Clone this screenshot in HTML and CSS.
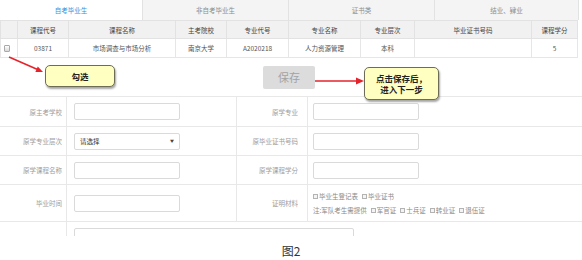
FILE: index.html
```html
<!DOCTYPE html>
<html lang="zh-CN">
<head>
    <meta charset="UTF-8">
    <meta name="viewport" content="width=device-width, initial-scale=1.0">
    <title>图2 - 免考申请</title>
    <link rel="stylesheet" href="styles.css">
</head>
<body>
    <div class="shot">
        <!-- 选项卡 -->
        <div class="tabs">
            <div class="tab active">自考毕业生</div>
            <div class="tab">非自考毕业生</div>
            <div class="tab">证书类</div>
            <div class="tab last">结业、肄业</div>
        </div>

        <!-- 课程表 -->
        <table class="course-table">
            <colgroup>
                <col style="width:17px"><col style="width:51px"><col style="width:107px">
                <col style="width:51px"><col style="width:62px"><col style="width:72px">
                <col style="width:54px"><col style="width:117px"><col style="width:46px">
            </colgroup>
            <thead>
                <tr>
                    <th></th>
                    <th>课程代号</th>
                    <th>课程名称</th>
                    <th>主考院校</th>
                    <th>专业代号</th>
                    <th>专业名称</th>
                    <th>专业层次</th>
                    <th>毕业证书号码</th>
                    <th>课程学分</th>
                </tr>
            </thead>
            <tbody>
                <tr>
                    <td class="chk-cell"><span class="chk"></span></td>
                    <td>03871</td>
                    <td>市场调查与市场分析</td>
                    <td>南京大学</td>
                    <td>A2020218</td>
                    <td>人力资源管理</td>
                    <td>本科</td>
                    <td></td>
                    <td>5</td>
                </tr>
            </tbody>
        </table>

        <div class="save-row">
            <button class="btn-save">保存</button>
        </div>

        <!-- 原学历表单 -->
        <div class="form">
            <div class="lbl">原主考学校</div>
            <div class="fld"><span class="inp"></span></div>
            <div class="lbl r">原学专业</div>
            <div class="fld r"><span class="inp"></span></div>

            <div class="lbl">原学专业层次</div>
            <div class="fld"><span class="inp sel"><span>请选择</span><span class="caret">▼</span></span></div>
            <div class="lbl r">原毕业证书号码</div>
            <div class="fld r"><span class="inp"></span></div>

            <div class="lbl">原学课程名称</div>
            <div class="fld"><span class="inp"></span></div>
            <div class="lbl r">原学课程学分</div>
            <div class="fld r"><span class="inp"></span></div>

            <div class="lbl">毕业时间</div>
            <div class="fld"><span class="inp"></span></div>
            <div class="lbl r">证明材料</div>
            <div class="fld r proof">
                <div class="proof-line">
                    <span class="opt"><span class="box"></span>毕业生登记表</span>
                    <span class="opt"><span class="box"></span>毕业证书</span>
                </div>
                <div class="proof-line">
                    <span>注:军队考生需提供</span>
                    <span class="opt"><span class="box"></span>军官证</span>
                    <span class="opt"><span class="box"></span>士兵证</span>
                    <span class="opt"><span class="box"></span>转业证</span>
                    <span class="opt"><span class="box"></span>退伍证</span>
                </div>
            </div>

            <div class="lbl"></div>
            <div class="fld wide"><span class="area"></span></div>
        </div>

        <!-- 标注 -->
        <svg class="arrows" width="582" height="236" viewBox="0 0 582 236">
            <line x1="9" y1="57" x2="37" y2="69.3" stroke="#e5232b" stroke-width="1.6"/>
            <polygon points="43,72 35.4,72 37.8,66.4" fill="#e5232b"/>
            <line x1="315" y1="81" x2="357" y2="81" stroke="#e5232b" stroke-width="1.6"/>
            <polygon points="364,81 356,77.5 356,84.5" fill="#e5232b"/>
        </svg>
        <div class="callout callout-check">勾选</div>
        <div class="callout callout-save">点击保存后，<br>进入下一步</div>
    </div>

    <p class="caption">图2</p>
</body>
</html>
```

FILE: styles.css
```css
/* 全体 */
* {
    box-sizing: border-box;
}

body {
    margin: 0;
    width: 582px;
    font-family: "Noto Sans CJK SC", "Liberation Sans", sans-serif;
    color: #555;
    background: #fff;
}

.shot {
    position: relative;
    width: 582px;
    height: 236px;
    overflow: hidden;
}

/* 选项卡 */
.tabs {
    display: grid;
    grid-template-columns: 142px 146px 146px 145px;
    height: 20px;
}

.tab {
    display: flex;
    align-items: center;
    justify-content: center;
    font-size: 6.5px;
    color: #8c8c8c;
    background: #f4f4f4;
    border-left: 1px solid #e2e2e2;
}

.tab.active {
    color: #3b8fd9;
    background: #fff;
    border-left: none;
}

.tab.last {
    border-right: 1px solid #e2e2e2;
}

/* 课程表 */
.course-table {
    width: 577px;
    border-collapse: collapse;
    table-layout: fixed;
    font-size: 6.5px;
    text-align: center;
}

.course-table th {
    height: 18px;
    padding: 0;
    font-weight: normal;
    color: #444;
    background: #f1f1f1;
    border: 1px solid #e2e2e2;
}

.course-table td {
    height: 19px;
    padding: 0;
    color: #555;
    border: 1px solid #e6e6e6;
}

.course-table td.chk-cell {
    text-align: left;
    vertical-align: top;
    padding: 5px 0 0 3px;
}

.chk {
    display: inline-block;
    width: 6px;
    height: 7px;
    border: 1px solid #a9a9a9;
    border-radius: 1px;
    background: linear-gradient(#fff, #d8d8d8);
}

/* 保存 */
.save-row {
    width: 578px;
    height: 38px;
    display: flex;
    align-items: center;
    justify-content: center;
}

.btn-save {
    width: 52px;
    height: 23px;
    border: none;
    border-radius: 2px;
    background: #dcdcdc;
    color: #a3a3a3;
    font-family: inherit;
    font-size: 11px;
    padding: 0;
}

/* 表单 */
.form {
    display: grid;
    grid-template-columns: 67px 170px 71px 274px;
    grid-template-rows: 30px 29px 29px 37px 40px;
    border-top: 1px solid #e8e8e8;
    font-size: 6.5px;
}

.form .lbl {
    display: flex;
    align-items: center;
    justify-content: flex-end;
    padding-right: 4px;
    color: #9d9d9d;
    border-right: 1px solid #e8e8e8;
    border-bottom: 1px solid #e8e8e8;
}

.form .lbl.r {
    padding-right: 9px;
}

.form .fld {
    display: flex;
    align-items: center;
    padding-left: 7px;
    border-right: 1px solid #e8e8e8;
    border-bottom: 1px solid #e8e8e8;
}

.form .fld.r {
    padding-left: 5px;
    border-right: none;
}

.form .fld.wide {
    grid-column: span 3;
    align-items: flex-start;
    padding-top: 6px;
    border-right: none;
}

.inp {
    display: block;
    width: 106px;
    height: 17px;
    border: 1px solid #dadada;
    border-radius: 2px;
    background: #fff;
}

.sel {
    display: flex;
    align-items: center;
    justify-content: space-between;
    padding: 0 5px 0 5px;
    color: #333;
}

.caret {
    font-size: 4px;
    color: #444;
}

.area {
    display: block;
    width: 280px;
    height: 30px;
    border: 1px solid #dadada;
    border-radius: 2px;
}

.form .fld.proof {
    flex-direction: column;
    align-items: flex-start;
    justify-content: center;
    gap: 5px;
    color: #8a8a8a;
}

.proof-line {
    display: flex;
    gap: 4px;
    line-height: 9px;
}

.opt {
    display: flex;
    align-items: center;
}

.box {
    display: inline-block;
    width: 5px;
    height: 5px;
    margin-right: 1px;
    border: 1px solid #b3b3b3;
    background: #f4f4f4;
}

/* 标注 */
.arrows {
    position: absolute;
    left: 0;
    top: 0;
    pointer-events: none;
}

.callout {
    position: absolute;
    display: flex;
    align-items: center;
    justify-content: center;
    text-align: center;
    font-size: 8.5px;
    font-weight: bold;
    line-height: 1.25;
    color: #222;
    background: #ffffc2;
    border: 1px solid #6d6d57;
    border-radius: 5px;
    box-shadow: 1px 2px 2px rgba(0, 0, 0, 0.35);
}

.callout-check {
    left: 45px;
    top: 65px;
    width: 70px;
    height: 22px;
}

.callout-save {
    left: 364px;
    top: 67px;
    width: 75px;
    height: 33px;
}

/* 图注 */
.caption {
    margin: 7px 0 0;
    text-align: center;
    font-size: 12px;
    line-height: 16px;
    color: #333;
}
```
